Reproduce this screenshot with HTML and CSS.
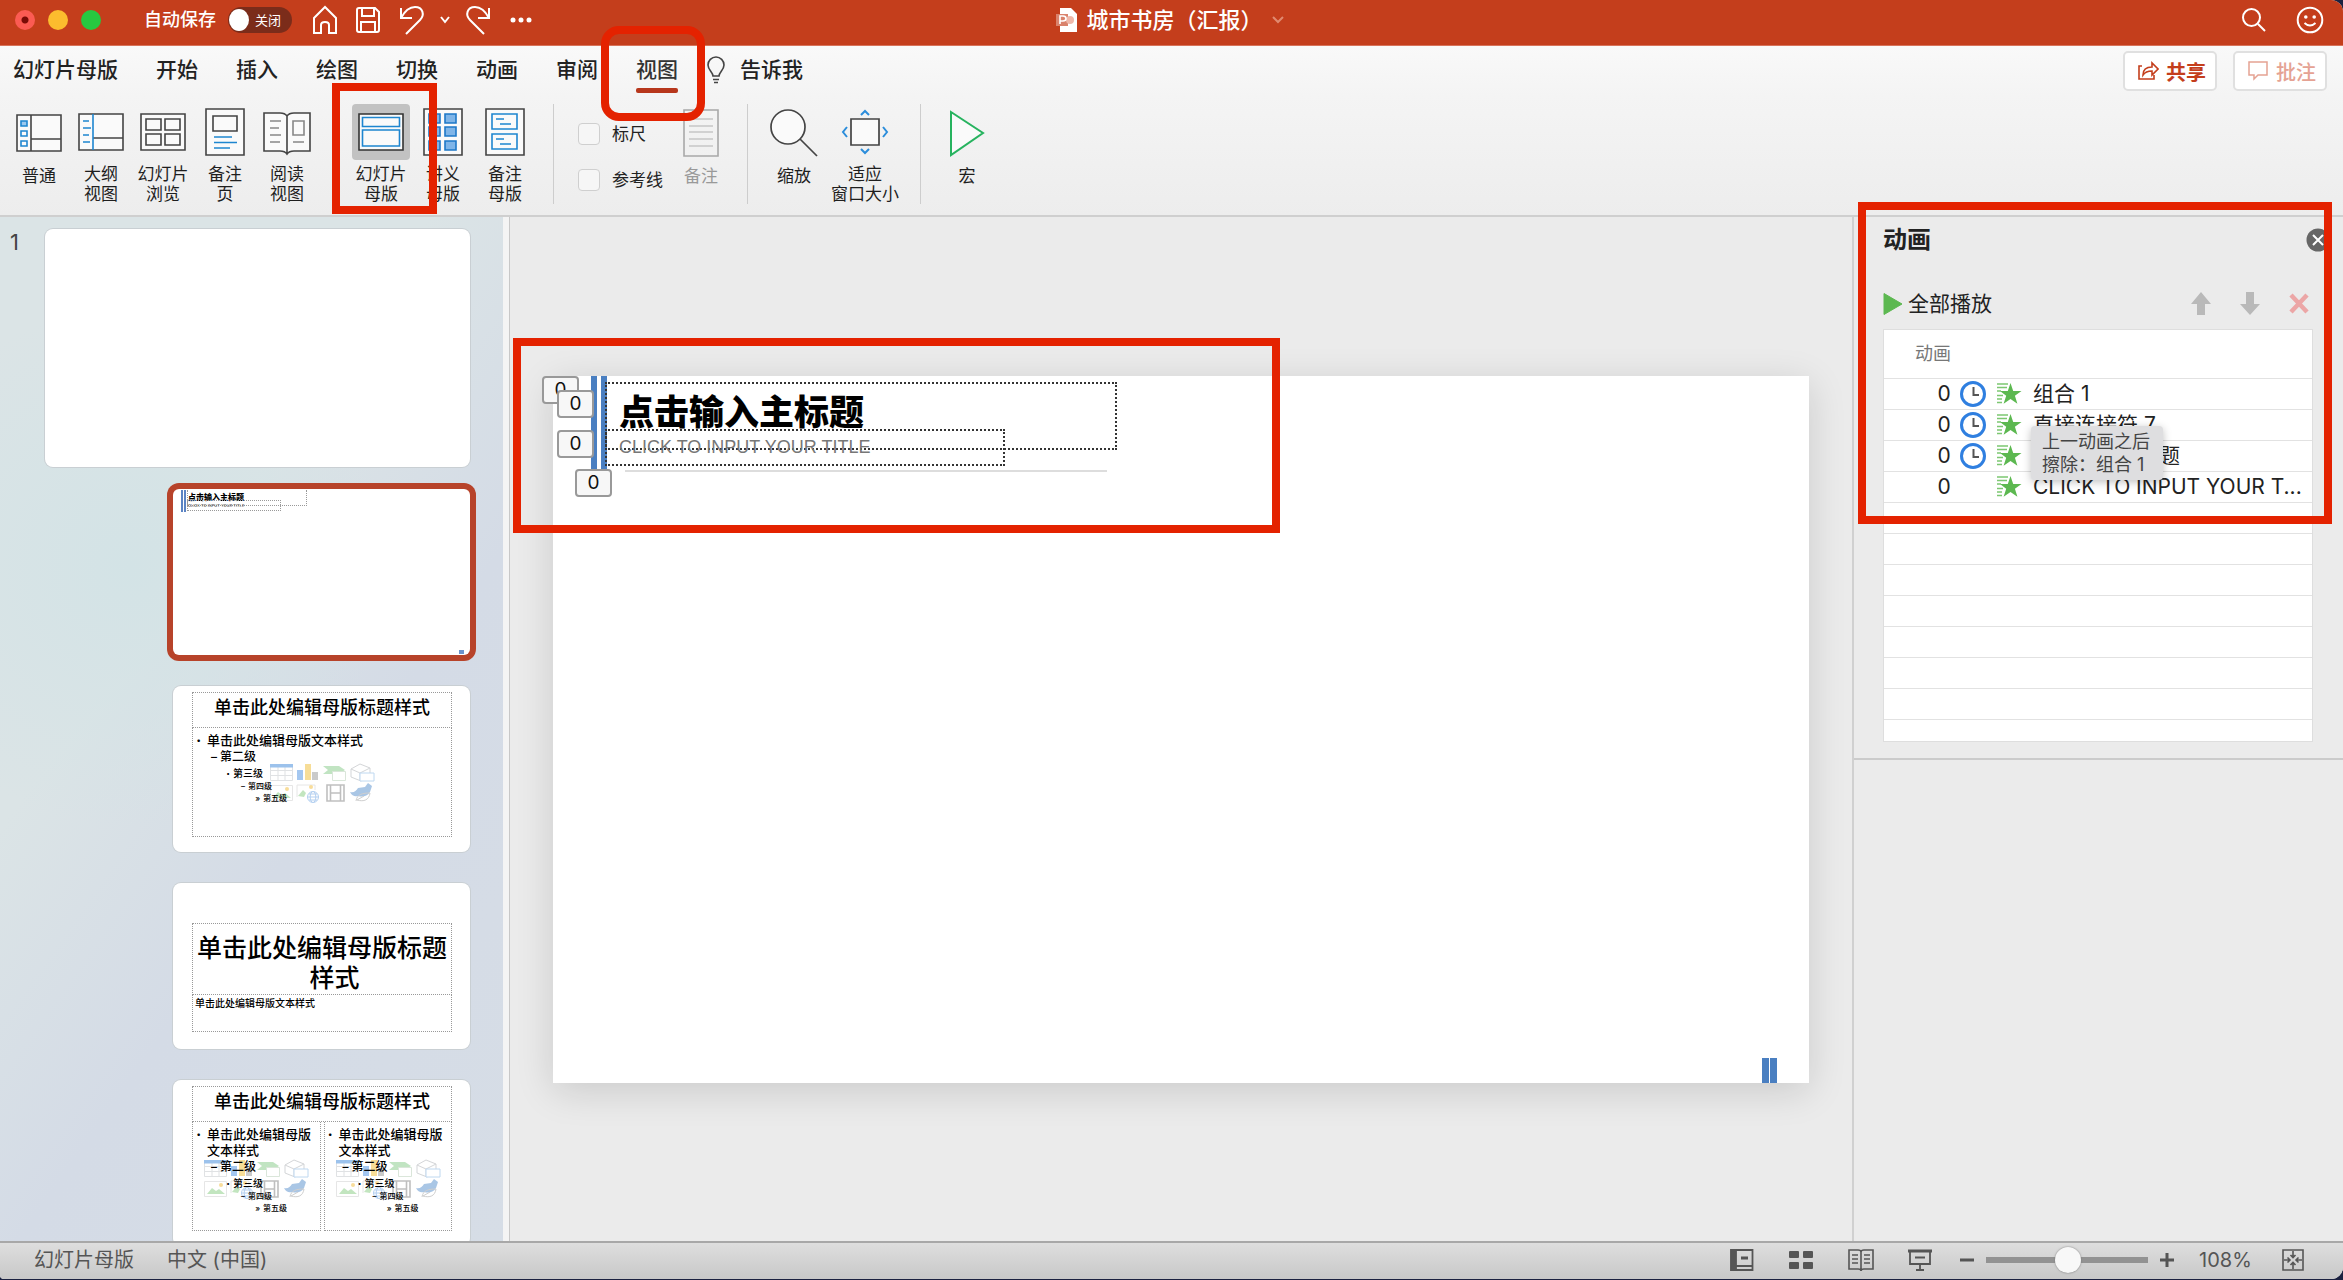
FILE: index.html
```html
<!DOCTYPE html>
<html lang="zh-CN">
<head>
<meta charset="utf-8">
<title>城市书房（汇报）</title>
<link rel="stylesheet" href="styles.css">
</head>
<body>
<svg class="sprite" aria-hidden="true">
  <symbol id="clock" viewBox="0 0 26 26"><circle cx="13" cy="13" r="11.500" fill="#fff" stroke="#2f7fe0" stroke-width="3"/><path d="M13.500 6v8h5.500" fill="none" stroke="#555" stroke-width="2"/></symbol>
  <symbol id="star" viewBox="0 0 26 26"><path d="M14.500 2l2.700 8h8.300l-6.600 4.800 2.500 8-6.900-4.900-6.900 4.900 2.600-8L4 10h7.800z" fill="#5cb850"/><path d="M1 3h11M1 6.500h10M1 10h4M1 14.500h6M1 18h5M1 21.500h5" stroke="#7cc771" stroke-width="1.700"/></symbol>
  <symbol id="media" viewBox="0 0 106 40">
    <path d="M1.500 2.500h22v15h-22zM1.500 7.500h22M1.500 12.500h22M9 4v13.500M16 4v13.500" fill="none" stroke="#d3d6d9"/><path d="M1 1h23v3.500H1z" fill="#73a9e4"/>
    <path d="M28 7h6v10h-6z" fill="#7eb0ea"/><path d="M36 1h6v16h-6z" fill="#f4cf6c"/><path d="M43 9h6v8h-6z" fill="#b5b5b5"/>
    <path d="M54 3h16l6 4-6 4H54l5-4z" fill="#a7d9a9"/><path d="M63.500 8.500h13v9h-13z" fill="#fff" stroke="#cbdccb"/>
    <path d="M82 6l9-5 10 4v8l-9 5-10-4zM82 6l9 4 10-5M91 10v8" fill="none" stroke="#c2c5c8"/><path d="M91 10h14v8H91z" fill="#fff" stroke="#a4c8ec"/>
    <path d="M1.500 22.500h22v15h-22z" fill="none" stroke="#dcdcdc"/><path d="M4 35l5-6 4 3 3-2 6 5z" fill="#a9dba5"/><circle cx="18" cy="26" r="2" fill="#f6cf72"/>
    <path d="M28 34v-12h18v5" fill="none" stroke="#dcdcdc"/><path d="M29 33l5-6 3 3-2 4z" fill="#a9dba5"/><circle cx="42" cy="24" r="2" fill="#f6cf72"/>
    <g fill="#fff" stroke="#93bceb"><circle cx="44" cy="34" r="5.500"/><ellipse cx="44" cy="34" rx="2.800" ry="5.500"/><path d="M38.500 34h11M40 31h8M40 37h8"/></g>
    <path d="M58 22h17v16H58zM61.500 22v16M71.500 22v16M61.500 30h10" fill="none" stroke="#a5a5a5" stroke-width="1.600"/>
    <path d="M81 29c4 1 6-1 8-4l7-1 3-4 4 3-2 6c-3 5-8 5-12 4-3 1-6 0-8-4z" fill="#86aedb"/><path d="M87 38c1-7 7-8 14-8-1 7-6 9-13 7l7-4" fill="none" stroke="#bbb"/>
  </symbol>
</svg>

<div class="app">
<header class="titlebar">
  <div class="title-left">
    <div class="lights"><i class="light close"></i><i class="light min"></i><i class="light max"></i></div>
    <label class="autosave"><span>自动保存</span><span class="switch"><input type="checkbox"><span class="switch-text">关闭</span></span></label>
    <div class="quick">
      <button aria-label="主页"><svg width="26" height="30" viewBox="0 0 26 30"><path d="M2 13L13 2l11 11v15h-7v-8q0-3-4-3t-4 3v8H2z"/></svg></button>
      <button aria-label="保存"><svg width="26" height="28" viewBox="0 0 26 28"><path d="M2 4q0-2 2-2h16l4 4v18q0 2-2 2H4q-2 0-2-2zM7 2v8h12V2M6 26V16h14v10"/></svg></button>
      <button aria-label="撤消"><svg width="28" height="32" viewBox="0 0 28 32"><path d="M3 4v10h11M3 14Q9 3 17 3c8 0 10 8 5 13L8 30"/></svg></button>
      <button class="mini" aria-label="撤消列表"><svg width="12" height="10" viewBox="0 0 12 10"><path d="M2 2l4 5 4-5"/></svg></button>
      <button aria-label="重做"><svg width="28" height="32" viewBox="0 0 28 32"><path d="M25 4v10H14M25 14Q19 3 11 3C3 3 1 11 6 16l14 14"/></svg></button>
      <button aria-label="更多"><svg width="24" height="8" viewBox="0 0 24 8"><g fill="#fff" stroke="none"><circle cx="4" cy="4" r="2.500"/><circle cx="12" cy="4" r="2.500"/><circle cx="20" cy="4" r="2.500"/></g></svg></button>
    </div>
  </div>
  <div class="doc">
    <svg width="22" height="26" viewBox="0 0 22 26"><path d="M4 1h11l6 6v18H4z" fill="#fff"/><path d="M0 7h12v12H0z" fill="#d9826c"/><circle cx="14" cy="13" r="4" fill="#efb8aa"/><path d="M4 17V9h3q3 0 3 2.500T7 14H4" fill="none" stroke="#fff" stroke-width="1.600"/></svg>
    <span>城市书房（汇报）</span>
    <svg width="14" height="10" viewBox="0 0 14 10"><path d="M2 2l5 5 5-5" fill="none" stroke="#e08a70" stroke-width="2"/></svg>
  </div>
  <div class="title-right">
    <button aria-label="搜索"><svg width="26" height="26" viewBox="0 0 26 26"><circle cx="10.500" cy="10.500" r="8.500"/><path d="M17 17l7 7"/></svg></button>
    <button aria-label="反馈"><svg width="28" height="28" viewBox="0 0 28 28"><circle cx="14" cy="14" r="12.300"/><path d="M8.500 17q5.500 5 11 0"/><g fill="#fff" stroke="none"><circle cx="9.800" cy="11" r="1.800"/><circle cx="18.200" cy="11" r="1.800"/></g></svg></button>
  </div>
</header>

<nav class="tabs">
  <button>幻灯片母版</button><button>开始</button><button>插入</button><button>绘图</button><button>切换</button><button>动画</button><button>审阅</button>
  <button class="active">视图<i class="mark mark-tab"></i></button>
  <button class="tell"><svg width="20" height="28" viewBox="0 0 20 28"><path d="M7 20c0-4-5-6-5-11a8 8 0 0 1 16 0c0 5-5 7-5 11zM7 23.500h6M8 26.500h4" fill="none" stroke="#444" stroke-width="1.600"/></svg>告诉我</button>
  <div class="actions">
    <button class="share"><svg width="22" height="20" viewBox="0 0 22 20"><path d="M5 5H2v13h15v-4M6 14c0-6 4-8 9-8V2l6 6-6 6v-4c-4 0-7 1-9 4z" fill="none" stroke="#c43e1c" stroke-width="1.600"/></svg>共享</button>
    <button class="note"><svg width="22" height="20" viewBox="0 0 22 20"><path d="M2 1h18v13h-9l-4 4v-4H2z" fill="none" stroke="#e5a293" stroke-width="1.500"/></svg>批注</button>
  </div>
</nav>

<section class="ribbon">
  <div class="group">
    <button class="tool"><span class="pic"><svg width="46" height="48" viewBox="0 0 46 48" fill="none" stroke="#444" stroke-width="1.600"><path fill="#fafafa" d="M1 6h44v36H1zM15 6v36M15 30h30"/><path stroke="#1e86d0" fill="#9cc9ee" d="M5 12h6v5H5z"/><path stroke="#1e86d0" d="M5 22h6v5H5zM5 32h6v5H5z"/></svg></span>普通</button>
    <button class="tool"><span class="pic"><svg width="46" height="48" viewBox="0 0 46 48" fill="none" stroke="#444" stroke-width="1.600"><path fill="#fafafa" d="M1 6h44v36H1zM15 30h30"/><path stroke="#1e86d0" d="M15 6v36M5 13h6M5 20h8M5 27h6M5 34h7"/></svg></span>大纲<br>视图</button>
    <button class="tool"><span class="pic"><svg width="46" height="48" viewBox="0 0 46 48" fill="none" stroke="#444" stroke-width="1.600"><path fill="#fafafa" d="M1 6h44v36H1z"/><path d="M6 11h15v11H6zM25 11h15v11H25zM6 26h15v11H6zM25 26h15v11H25z"/></svg></span>幻灯片<br>浏览</button>
    <button class="tool"><span class="pic"><svg width="46" height="48" viewBox="0 0 46 48" fill="none" stroke="#444" stroke-width="1.600"><path fill="#fafafa" d="M4 1h38v46H4zM11 8h24v15H11z"/><path stroke="#1e86d0" d="M12 29h18M12 34.500h23M12 40h16"/></svg></span>备注<br>页</button>
    <button class="tool"><span class="pic"><svg width="50" height="48" viewBox="0 0 50 48" fill="none" stroke="#444" stroke-width="1.600"><path fill="#fafafa" d="M2 5h16q5 0 7 3 2-3 7-3h16v38H32q-5 0-7 3-2-3-7-3H2zM25 8v37"/><path stroke="#888" d="M8 13h11M8 20h9M8 27h11M8 34h10M31 13h11v14H31zM31 34h11"/></svg></span>阅读<br>视图</button>
  </div>
  <div class="group masters">
    <button class="tool selected"><span class="pic"><svg width="46" height="48" viewBox="0 0 46 48" fill="none" stroke="#333" stroke-width="1.600"><path fill="#fafafa" d="M1 6h44v36H1z"/><path stroke="#1e86d0" d="M4.500 9.500h37v9h-37zM4.500 22h37v16h-37z"/></svg></span>幻灯片<br>母版<i class="mark mark-tool"></i></button>
    <button class="tool"><span class="pic"><svg width="46" height="48" viewBox="0 0 46 48" fill="none" stroke="#444" stroke-width="1.600"><path fill="#fafafa" d="M4 1h38v46H4z"/><path stroke="#1e78c8" fill="#7fb5e8" d="M9 6h11v9H9zM25 6h11v9H25zM9 19h11v9H9zM25 19h11v9H25zM9 33h11v9H9zM25 33h11v9H25z"/></svg></span>讲义<br>母版</button>
    <button class="tool"><span class="pic"><svg width="46" height="48" viewBox="0 0 46 48" fill="none" stroke="#444" stroke-width="1.600"><path fill="#fafafa" d="M4 1h38v46H4z"/><path stroke="#1e86d0" d="M10 6h25v15H10zM10 26h25v15H10zM14 11h8M18 16h11M14 31h8M18 36h11"/></svg></span>备注<br>母版</button>
  </div>
  <div class="group sep show">
    <div class="checks">
      <label><input type="checkbox">标尺</label>
      <label><input type="checkbox">参考线</label>
    </div>
    <button class="tool off" disabled><span class="pic"><svg width="46" height="48" viewBox="0 0 46 48" fill="none" stroke="#a8a8a8" stroke-width="1.600"><path d="M6 1h34v46H6z"/><path stroke="#c6c6c6" d="M11 10h24M11 17h24M11 23h24M11 30h24M11 37h24"/></svg></span>备注</button>
  </div>
  <div class="group sep">
    <button class="tool"><span class="pic"><svg width="50" height="50" viewBox="0 0 50 50" fill="none" stroke="#444" stroke-width="1.700"><circle fill="#fafafa" cx="19" cy="19" r="17"/><path d="M31 31l17 17"/></svg></span>缩放</button>
    <button class="tool wide"><span class="pic"><svg width="48" height="48" viewBox="0 0 48 48" fill="none" stroke="#444" stroke-width="1.700"><path fill="#fafafa" d="M10 11h28v26H10z"/><path stroke="#2b8ddb" stroke-width="2" d="M20 7l4-4 4 4M20 41l4 4 4-4M6 19l-4 5 4 5M42 19l4 5-4 5"/></svg></span>适应<br>窗口大小</button>
  </div>
  <div class="group sep">
    <button class="tool"><span class="pic"><svg width="36" height="48" viewBox="0 0 36 48"><path d="M2 3l32 21L2 46z" fill="#fafafa" stroke="#27b35f" stroke-width="2"/></svg></span>宏</button>
  </div>
</section>

<main class="work">
  <aside class="thumbs">
    <span class="num">1</span>
    <div class="list">
      <div class="thumb master"></div>
      <div class="thumb layout current">
        <div class="mini-bars"></div><div class="mini-title">点击输入主标题</div><div class="mini-sub">CLICK TO INPUT YOUR TITLE</div><div class="mini-end"></div>
      </div>
      <div class="thumb layout">
        <div class="ph head">单击此处编辑母版标题样式</div>
        <div class="ph body">
          <svg class="media center"><use href="#media"/></svg>
          <ul><li class="l1">单击此处编辑母版文本样式</li><li class="l2">第二级</li><li class="l3">第三级</li><li class="l4">第四级</li><li class="l5">第五级</li></ul>
        </div>
      </div>
      <div class="thumb layout section">
        <div class="ph big">单击此处编辑母版标题<br>&emsp;样式</div>
        <div class="ph small">单击此处编辑母版文本样式</div>
      </div>
      <div class="thumb layout">
        <div class="ph head">单击此处编辑母版标题样式</div>
        <div class="pair">
          <div class="ph body"><svg class="media"><use href="#media"/></svg>
          <ul><li class="l1">单击此处编辑母版文本样式</li><li class="l2">第二级</li><li class="l3">第三级</li><li class="l4">第四级</li><li class="l5">第五级</li></ul></div>
          <div class="ph body"><svg class="media"><use href="#media"/></svg>
          <ul><li class="l1">单击此处编辑母版文本样式</li><li class="l2">第二级</li><li class="l3">第三级</li><li class="l4">第四级</li><li class="l5">第五级</li></ul></div>
        </div>
      </div>
    </div>
  </aside>

  <section class="canvas">
    <div class="slide">
      <div class="bars"></div>
      <div class="box-title">点击输入主标题</div>
      <div class="box-sub">CLICK TO INPUT YOUR TITLE</div>
      <div class="rule"></div>
      <span class="tag t1">0</span><span class="tag t2">0</span><span class="tag t3">0</span><span class="tag t4">0</span>
      <div class="end"></div>
    </div>
    <i class="mark mark-canvas"></i>
  </section>

  <aside class="side">
    <div class="pane">
      <div class="pane-head"><h2>动画</h2><button aria-label="关闭"><svg width="24" height="24" viewBox="0 0 24 24"><circle cx="12" cy="12" r="11.500" fill="#666"/><path d="M7 7l10 10M17 7L7 17" stroke="#fff" stroke-width="2"/></svg></button></div>
      <div class="pane-tools">
        <button class="play"><svg width="20" height="24" viewBox="0 0 20 24"><path d="M1 1.500L19 12 1 22.500z" fill="#5cb850" stroke="#5cb850" stroke-linejoin="round"/></svg>全部播放</button>
        <div class="orders">
          <button aria-label="上移"><svg width="20" height="24" viewBox="0 0 20 24"><path d="M10 0l10 12h-6v11H6V12H0z" fill="#b9b9b9"/></svg></button>
          <button aria-label="下移"><svg width="20" height="24" viewBox="0 0 20 24"><path d="M10 23L0 12h6V0h8v12h6z" fill="#b9b9b9"/></svg></button>
          <button aria-label="删除"><svg width="20" height="24" viewBox="0 0 20 24"><path d="M2 3l16 17M18 3L2 20" stroke="#eca6a6" stroke-width="4.500"/></svg></button>
        </div>
      </div>
      <div class="anims">
        <table>
          <colgroup><col class="c-num"><col class="c-ico"><col class="c-ico"><col></colgroup>
          <thead><tr><th colspan="4">动画</th></tr></thead>
          <tbody>
            <tr><td class="n">0</td><td><svg><use href="#clock"/></svg></td><td><svg><use href="#star"/></svg></td><td>组合 1</td></tr>
            <tr><td class="n">0</td><td><svg><use href="#clock"/></svg></td><td><svg><use href="#star"/></svg></td><td>直接连接符 7</td></tr>
            <tr><td class="n">0</td><td><svg><use href="#clock"/></svg></td><td><svg><use href="#star"/></svg></td><td>点击输入主标题</td></tr>
            <tr><td class="n">0</td><td></td><td><svg><use href="#star"/></svg></td><td>CLICK TO INPUT YOUR T...</td></tr>
            <tr><td colspan="4"></td></tr><tr><td colspan="4"></td></tr><tr><td colspan="4"></td></tr><tr><td colspan="4"></td></tr>
            <tr><td colspan="4"></td></tr><tr><td colspan="4"></td></tr><tr><td colspan="4"></td></tr>
            <tr class="last"><td colspan="4"></td></tr>
          </tbody>
        </table>
        <div class="tip" role="tooltip">上一动画之后<br>擦除：组合 1</div>
      </div>
    </div>
    <i class="mark mark-pane"></i>
  </aside>
</main>

<footer class="status">
  <span>幻灯片母版</span><span>中文 (中国)</span>
  <div class="views">
    <button aria-label="普通视图"><svg width="24" height="24" viewBox="0 0 24 24" fill="none" stroke="#555" stroke-width="1.800"><path d="M1.500 2h21v20h-21zM6 18h16.500"/><path d="M1 2h5v20H1z" fill="#555"/><path d="M11 10h7" stroke-width="3"/></svg></button>
    <button aria-label="浏览视图"><svg width="26" height="24" viewBox="0 0 26 24" fill="#555"><rect x="1" y="3" width="10" height="7" rx="1"/><rect x="15" y="3" width="10" height="7" rx="1"/><rect x="1" y="14" width="10" height="7" rx="1"/><rect x="15" y="14" width="10" height="7" rx="1"/></svg></button>
    <button aria-label="阅读视图"><svg width="26" height="24" viewBox="0 0 26 24" fill="none" stroke="#555" stroke-width="1.600"><path d="M1 2h9q3 0 3 2 0-2 3-2h9v19h-9q-3 0-3 2 0-2-3-2H1zM13 4v18M4 7h6M4 11h6M4 15h6M16 7h6M16 11h6M16 15h6"/></svg></button>
    <button aria-label="放映"><svg width="24" height="24" viewBox="0 0 24 24" fill="none" stroke="#555" stroke-width="1.800"><path d="M0 3h24" stroke-width="3"/><path d="M2 4v12h20V4M7 9.500h10M12 16v6M8 22h8"/></svg></button>
  </div>
  <div class="zoom">
    <button aria-label="缩小"><svg width="14" height="14" viewBox="0 0 14 14"><path d="M0 7h14" stroke="#555" stroke-width="3"/></svg></button>
    <input type="range" min="0" max="100" value="51" aria-label="缩放">
    <button aria-label="放大"><svg width="14" height="14" viewBox="0 0 14 14"><path d="M0 7h14M7 0v14" stroke="#555" stroke-width="3"/></svg></button>
    <output>108%</output>
    <button class="fit" aria-label="适应窗口"><svg width="22" height="24" viewBox="0 0 22 24" fill="none" stroke="#555" stroke-width="1.600"><path d="M1 2h20v20H1zM11 3v6M11 15v6M2 12h6M14 12h6M8.500 7l2.500 2.500L13.500 7M8.500 17l2.500-2.500 2.500 2.500M5.500 9.500L8 12l-2.500 2.500M16.500 9.500L14 12l2.500 2.500"/></svg></button>
  </div>
</footer>
</div>
</body>
</html>
```
FILE: styles.css
```css
* { box-sizing: border-box; }
body {
  margin: 0;
  background: #1b2140;
  color: #222;
  font-family: Inter, "Noto Sans CJK SC", sans-serif;
}
button { background: none; border: 0; padding: 0; margin: 0; font: inherit; color: inherit; }
svg { display: block; flex: none; }
.sprite { position: absolute; width: 0; height: 0; }
.app {
  display: grid;
  grid-template-rows: 46px 50px 121px minmax(0, 1fr) 38px;
  height: calc(100vh - 1px);
  border-radius: 0 12px 12px 4px;
  overflow: hidden;
  background: #ebebeb;
}
.mark { position: absolute; border: 8px solid #e42200; pointer-events: none; z-index: 5; }

/* title bar */
.titlebar {
  display: grid;
  grid-template-columns: 1fr auto 1fr;
  align-items: center;
  background: #c43e1c;
  border-bottom: 1px solid #d8735a;
  color: #fff;
  padding: 0 19px 5px 15px;
}
.title-left { display: flex; align-items: center; }
.lights { display: flex; gap: 13px; margin-right: 43px; }
.light { width: 20px; height: 20px; border-radius: 50%; }
.close { background: radial-gradient(circle, #7a0b06 3px, #fb5b53 4px); }
.min { background: #fcbc2e; }
.max { background: #27c840; }
.autosave { display: flex; align-items: center; gap: 12px; font-size: 18px; font-weight: 500; line-height: 24px; }
.switch { display: flex; align-items: center; justify-content: space-between; width: 64px; height: 26px; border-radius: 13px; background: #7b2c1a; padding: 2px 11px 2px 1px; }
.switch input { appearance: none; width: 20px; height: 22px; border-radius: 50%; background: #fff; margin: 0; }
.switch-text { font-size: 13px; font-weight: 400; }
.quick { display: flex; align-items: center; gap: 17px; margin-left: 20px; }
.quick svg, .title-right svg { fill: none; stroke: #fff; stroke-width: 2; }
.quick .mini { margin: 0 -4px; }
.doc { display: flex; align-items: center; gap: 8px; padding-left: 2px; font-size: 22px; line-height: 30px; font-weight: 500; }
.title-right { display: flex; align-items: center; justify-content: flex-end; gap: 29px; }

/* tabs */
.tabs { display: flex; align-items: center; gap: 38px; padding: 0 16px 2px 13px; font-size: 21px; font-weight: 500; background: linear-gradient(#f9f9f9, #f4f4f4); }
.tabs > button { height: 44px; line-height: 44px; }
.active { position: relative; color: #333; }
.active::after { content: ""; position: absolute; left: 0; right: 0; bottom: -1px; height: 5px; border-radius: 2px; background: #b7371c; }
.mark-tab { left: -35px; top: -22px; width: 104px; height: 95px; border-radius: 18px; }
.tabs > .tell { display: flex; align-items: center; gap: 14px; margin-left: -10px; }
.actions { display: flex; gap: 16px; margin: 2px 0 0 auto; }
.actions button { display: flex; align-items: center; gap: 7px; height: 40px; padding: 0 9px 0 12px; background: #fff; border: 2px solid #e0e0e0; border-radius: 5px; font-size: 20px; }
.share { color: #c43e1c; }
.actions .share { font-weight: 700; }
.note { color: #e5a293; }

/* ribbon */
.ribbon { display: flex; align-items: flex-start; padding: 8px 8px 0; background: linear-gradient(#f4f4f4, #ededed); border-bottom: 2px solid #cfcfcf; }
.group { display: flex; height: 100px; }
.masters { margin: 0 17px 0 32px; }
.sep { border-left: 1px solid #cdcdcd; padding: 0 15px; }
.show { padding-left: 24px; }
.tool { position: relative; display: flex; flex-direction: column; align-items: center; width: 62px; font-size: 17px; line-height: 20px; text-align: center; white-space: nowrap; color: #1e1e1e; }
.wide { width: 80px; }
.pic { display: flex; align-items: center; justify-content: center; width: 58px; height: 58px; margin-bottom: 4px; border-radius: 4px; }
.selected .pic { background: #c2c2c2; }
.off { color: #999; }
.mark-tool { left: -18px; top: -21px; width: 105px; height: 131px; }
.checks { display: grid; grid-template-rows: 22px 22px; align-content: start; row-gap: 24px; width: 92px; padding-top: 19px; font-size: 17px; line-height: 22px; }
.checks label { display: flex; gap: 12px; white-space: nowrap; }
.checks input { appearance: none; flex: none; width: 22px; height: 22px; margin: 0; border: 1px solid #cfcfcf; border-radius: 4px; background: #f6f6f6; }

/* work area */
.work { display: grid; grid-template-columns: 510px minmax(0, 1fr) 491px; min-height: 0; }
.thumbs {
  display: flex;
  overflow: hidden;
  padding: 12px 0 0 10px;
  border-right: 1px solid #c8c8c8;
  background: linear-gradient(90deg, transparent 503px, #f4f4f4 503px), radial-gradient(circle at 130px 350px, #d3e3e6, transparent 260px), linear-gradient(125deg, #dbe4e6 35%, #d4dbe6 60%, #d6dde6);
}
.num { width: 35px; flex: none; font-size: 22px; line-height: 26px; color: #444; }
.list { display: flex; flex-direction: column; align-items: flex-end; width: 425px; flex: none; }
.thumb { position: relative; flex: none; background: #fff; border-radius: 8px; box-shadow: 0 0 0 1px #c9cfd3; font-weight: 500; }
.master { width: 425px; height: 238px; margin-bottom: 22px; }
.layout { width: 297px; height: 166px; margin-bottom: 31px; padding: 6px 18px 0 19px; }
.current { box-shadow: 0 0 0 6px #b7432a; border-radius: 6px; }
.mini-bars { position: absolute; left: 8px; top: 1px; width: 5px; height: 22px; border: solid #5b84c4; border-width: 0 2px; }
.mini-title { position: absolute; left: 14px; top: 1px; width: 120px; height: 16px; border: 1px dotted #999; border-top: 0; font-size: 8px; line-height: 15px; font-weight: 900; color: #000; }
.mini-sub { position: absolute; left: 14px; top: 11px; width: 94px; height: 11px; border: 1px dotted #999; font-size: 4px; line-height: 10px; color: #666; white-space: nowrap; }
.mini-end { position: absolute; right: 6px; bottom: 1px; width: 5px; height: 4px; background: #6a92cc; }
.ph { position: relative; border: 1px dotted #999; color: #000; }
.head { height: 36px; font-size: 18px; line-height: 29px; text-align: center; white-space: nowrap; }
.body { height: 109px; border-top: 0; }
.pair { display: grid; grid-template-columns: 1fr 1fr; gap: 3px; }
.media { position: absolute; left: 10px; top: 37px; width: 106px; height: 40px; opacity: .7; }
.media.center { left: 76px; top: 35px; }
.body ul { position: relative; list-style: none; margin: 0; padding: 4px 0 0; }
.body li { position: relative; }
.body li::before { position: absolute; right: 100%; margin-right: 3px; content: "–"; }
.body .l1::before, .body .l3::before { content: "·"; font-weight: 900; }
.body .l5::before { content: "»"; }
.body .l1::before { margin-right: 6px; }
.l1 { margin-left: 14px; font-size: 13px; line-height: 16px; }
.l2 { margin-left: 27px; font-size: 12px; line-height: 18px; }
.l3 { margin-left: 40px; font-size: 10px; line-height: 14px; }
.l4 { margin-left: 55px; font-size: 8px; line-height: 13px; }
.l5 { margin-left: 70px; font-size: 8px; line-height: 11px; }
.section { padding-top: 40px; }
.big { height: 72px; padding-top: 9px; font-size: 25px; line-height: 30px; text-align: center; white-space: pre-wrap; }
.small { height: 37px; border-top: 0; padding-left: 2px; font-size: 10px; line-height: 16px; }

/* slide canvas */
.canvas { position: relative; padding: 159px 43px 0; }
.slide { position: relative; aspect-ratio: 16 / 9; background: #fff; box-shadow: 0 8px 36px rgba(0, 0, 0, .14); }
.bars { position: absolute; left: 38px; top: 0; width: 16px; height: 94px; border: solid #4a7fc1; border-width: 0 6px; }
.box-title { position: absolute; left: 52px; top: 6px; width: 512px; height: 68px; border: 2px dotted #333; padding-left: 12px; font-size: 35px; line-height: 56px; font-weight: 900; color: #000; }
.box-sub { position: absolute; left: 52px; top: 53px; width: 400px; height: 37px; border: 2px dotted #333; padding-left: 12px; font-family: "Liberation Sans", Arial, sans-serif; font-size: 18px; line-height: 33px; color: #777; }
.rule { position: absolute; left: 72px; top: 94px; width: 482px; height: 2px; background: #ddd; }
.tag { position: absolute; width: 37px; height: 28px; border: 2px solid #999; border-radius: 4px; background: #f7f7f7; font-size: 19px; line-height: 24px; text-align: center; color: #111; }
.t1 { left: -11px; top: 0; }
.t2 { left: 4px; top: 14px; }
.t3 { left: 4px; top: 54px; }
.t4 { left: 22px; top: 93px; }
.end { position: absolute; right: 32px; bottom: 0; width: 15px; height: 25px; border: solid #4a7fc1; border-width: 0 7px; }
.mark-canvas { left: 3px; top: 121px; width: 767px; height: 195px; }

/* animation pane */
.side { position: relative; border-left: 2px solid #d0d0d0; }
.pane { border-bottom: 2px solid #cbcbcb; padding: 8px 30px 16px 29px; height: 543px; }
.pane-head { display: flex; align-items: center; justify-content: space-between; height: 30px; margin-right: -17px; }
h2 { margin: 0; font-size: 24px; line-height: 30px; font-weight: 700; }
.pane-tools { display: flex; align-items: center; justify-content: space-between; height: 30px; margin: 34px 4px 10px 0; font-size: 21px; }
.play { display: flex; align-items: center; gap: 5px; line-height: 30px; }
.orders { display: flex; gap: 29px; }
.anims { position: relative; background: #fff; border: 1px solid #dedede; }
table { width: 100%; table-layout: fixed; border-collapse: separate; border-spacing: 0; }
.c-num { width: 76px; }
.c-ico { width: 36px; }
th { height: 48px; padding: 0 0 0 31px; text-align: left; font-size: 18px; line-height: 24px; font-weight: 400; color: #777; }
td { height: 31px; padding: 0; border-top: 1px solid #e2e2e2; font-size: 21px; line-height: 26px; white-space: nowrap; }
td svg { width: 26px; height: 26px; }
td:last-child { padding-left: 1px; }
.n { text-align: center; padding-left: 44px; }
.last td { height: 22px; }
.tip { position: absolute; left: 147px; top: 96px; width: 132px; padding: 4px 0 4px 11px; background: #dedee0; border-radius: 4px; box-shadow: 0 2px 8px rgba(0, 0, 0, .25); font-size: 18px; line-height: 23px; color: #444; white-space: nowrap; }
.mark-pane { left: 4px; top: -15px; width: 474px; height: 322px; }

/* status bar */
.status { display: flex; align-items: center; gap: 33px; padding: 0 39px 2px 34px; background: linear-gradient(#dedede, #c8c8c8); border-top: 2px solid #a8a8a8; font-size: 20px; line-height: 24px; color: #555; }
.views { display: flex; gap: 34px; margin-left: auto; }
.zoom { display: flex; align-items: center; gap: 12px; margin-left: -5px; }
.zoom input { appearance: none; width: 162px; height: 26px; margin: 0; background: linear-gradient(transparent 10px, #929292 10px, #929292 16px, transparent 16px); border-radius: 4px; }
.zoom input::-webkit-slider-thumb { appearance: none; width: 26px; height: 26px; border-radius: 50%; background: #f8f8f8; box-shadow: 0 0 2px #777; }
.zoom output { margin-left: 13px; width: 56px; }
.fit { margin-left: 15px; }
```
